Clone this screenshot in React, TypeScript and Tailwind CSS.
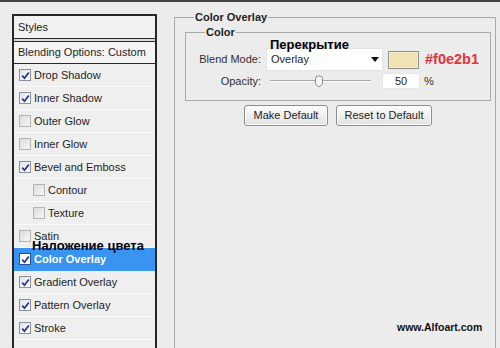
import type { ReactNode } from 'react';

type StyleItem = { label: string; checked: boolean; indent?: boolean; selected?: boolean };

const ITEMS: StyleItem[] = [
  { label: 'Drop Shadow', checked: true },
  { label: 'Inner Shadow', checked: true },
  { label: 'Outer Glow', checked: false },
  { label: 'Inner Glow', checked: false },
  { label: 'Bevel and Emboss', checked: true },
  { label: 'Contour', checked: false, indent: true },
  { label: 'Texture', checked: false, indent: true },
  { label: 'Satin', checked: false },
  { label: 'Color Overlay', checked: true, selected: true },
  { label: 'Gradient Overlay', checked: true },
  { label: 'Pattern Overlay', checked: true },
  { label: 'Stroke', checked: true },
];

function CheckBox({ checked, selected }: { checked: boolean; selected?: boolean }) {
  return (
    <span
      className={
        'flex h-[12px] w-[12px] shrink-0 items-center justify-center border ' +
        (selected
          ? 'border-[#1d4f9a] bg-white'
          : checked
            ? 'border-[#8a8f9c] bg-gradient-to-br from-[#dfe3ea] to-white'
            : 'border-[#b4b4b4] bg-gradient-to-br from-[#dcdcdc] to-[#f7f7f7]')
      }
    >
      {checked ? (
        <svg width="9" height="9" viewBox="0 0 9 9">
          <path d="M1.2 4.6 L3.5 7.2 L7.8 1.4" fill="none" stroke="#24308a" strokeWidth="1.7" />
        </svg>
      ) : null}
    </span>
  );
}

function StyleRow({ item }: { item: StyleItem }) {
  return (
    <div
      className={
        'flex h-[23px] shrink-0 items-center gap-[3px] border-b ' +
        (item.selected
          ? 'border-[#3894f0] bg-[#3894f0] font-bold text-white'
          : 'border-[#fbfbfb] text-[#1e1e1e]') +
        (item.indent ? ' pl-[19px]' : ' pl-[5px]')
      }
    >
      <CheckBox checked={item.checked} selected={item.selected} />
      <span className="leading-none">{item.label}</span>
    </div>
  );
}

function StylesPanel() {
  return (
    <div className="ml-[12px] mt-[12px] flex w-[145px] shrink-0 flex-col border-x-2 border-t-2 border-[#262626] bg-[#efefef] text-[11px]">
      <div className="flex h-[22px] items-center bg-[#f1f1f1] pl-[4px] text-[#1e1e1e]">Styles</div>
      <div className="h-[4px] border-y border-[#2a2a2a] bg-[#d9d9d9]" />
      <div className="flex h-[22px] items-center border-b border-[#2a2a2a] bg-[#f4f4f4] pl-[4px] text-[#1e1e1e]">
        Blending Options: Custom
      </div>
      {ITEMS.map((item) => (
        <StyleRow key={item.label} item={item} />
      ))}
      <div className="h-[40px]" />
    </div>
  );
}

function Group({ title, className, children }: { title: string; className: string; children: ReactNode }) {
  return (
    <fieldset className={'border border-[#a9a9a9] ' + className}>
      <legend className="ml-[19px] px-[1px] text-[11px] leading-[13px] font-bold text-[#1e1e1e]">{title}</legend>
      {children}
    </fieldset>
  );
}

function PsButton({ label, width }: { label: string; width: string }) {
  return (
    <button
      className={
        'flex h-[21px] items-center justify-center rounded-[3px] border border-[#8c8c8c] bg-gradient-to-b from-[#fdfdfd] to-[#e2e2e2] text-[11px] text-[#1e1e1e] shadow-[inset_0_0_0_1px_#ffffff] ' +
        width
      }
    >
      {label}
    </button>
  );
}

function ColorOverlayPanel() {
  return (
    <Group title="Color Overlay" className="ml-[17px] mt-[9px] h-[360px] w-[322px] shrink-0">
      <Group title="Color" className="ml-[10px] mt-[2px] w-[306px] pb-[11px]">
        <div className="mt-[9px] flex h-[23px] items-center">
          <span className="w-[75px] text-right text-[11px] text-[#303030]">Blend Mode:</span>
          <div className="ml-[5px] flex h-[23px] w-[117px] items-center justify-between border border-[#e2e2e2] bg-white pl-[4px] pr-[3px] text-[11px] text-[#1e1e1e]">
            <span>Overlay</span>
            <svg width="8" height="5" viewBox="0 0 8 5">
              <path d="M0 0 H8 L4 5 Z" fill="#111" />
            </svg>
          </div>
          <div className="ml-[5px] h-[18px] w-[31px] border border-[#8f8f8f] bg-[#f0e2b1] shadow-[inset_0_0_0_1px_#f7efd2]" />
          <span className="ml-[6px] text-[14.5px] font-bold leading-none text-[#e3333c]">#f0e2b1</span>
        </div>
        <div className="mt-[2px] flex h-[16px] items-center">
          <span className="w-[75px] text-right text-[11px] text-[#303030]">Opacity:</span>
          <div className="relative ml-[9px] h-[12px] w-[101px]">
            <div className="absolute left-0 right-0 top-[5px] h-[2px] border-t border-[#a8a8a8] bg-white" />
            <svg className="absolute left-[44px] top-[0px]" width="10" height="13" viewBox="0 0 10 13">
              <path d="M1.5 4 Q1.5 1 4 1 H6 Q8.5 1 8.5 4 V9 L5 12 L1.5 9 Z" fill="#f7f7f7" stroke="#8a8a8a" />
            </svg>
          </div>
          <div className="ml-[11px] flex h-[16px] w-[38px] items-center border border-[#e6e6e6] bg-white pl-[12px] text-[11px] text-[#1e1e1e]">
            50
          </div>
          <span className="ml-[4px] text-[11px] text-[#303030]">%</span>
        </div>
      </Group>
      <div className="ml-[69px] mt-[4px] flex gap-[8px]">
        <PsButton label="Make Default" width="w-[84px]" />
        <PsButton label="Reset to Default" width="w-[96px]" />
      </div>
    </Group>
  );
}

export default function App() {
  return (
    <div
      className="relative h-[348px] w-[500px] overflow-hidden border-t-2 border-[#444] bg-[#ececec]"
      style={{ fontFamily: '"Liberation Sans", Arial, sans-serif' }}
    >
      <div className="flex items-start">
        <StylesPanel />
        <ColorOverlayPanel />
      </div>

      {/* annotations drawn over the dialog */}
      <span className="absolute left-[32px] top-[236px] text-[13px] leading-[15px] font-bold text-black">
        Наложение цвета
      </span>
      <span className="absolute left-[270px] top-[35px] text-[13px] leading-[15px] font-bold text-black">
        Перекрытие
      </span>
      <span className="absolute left-[397px] top-[319px] text-[10.5px] leading-[13px] font-bold text-[#111]">
        www.Alfoart.com
      </span>
    </div>
  );
}
